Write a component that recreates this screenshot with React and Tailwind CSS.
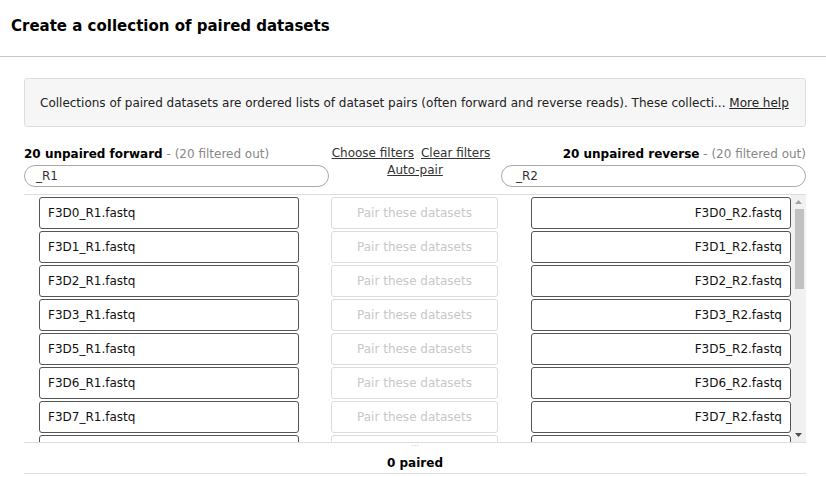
import React from "react";

const nums = ["0","1","2","3","5","6","7","8","9","141","142","143","144","145","146","147","148","149","150","10"];

export default function App() {
  return (
    <div className="w-[826px] h-[477px] bg-white text-[#222] overflow-hidden" style={{ fontFamily: '"DejaVu Sans", Verdana, sans-serif' }}>
      <div className="h-[57px] border-b border-[#c8c8c8] flex items-center pl-[11px] pb-[4px]">
        <h4 className="text-[15px] font-bold text-black">Create a collection of paired datasets</h4>
      </div>
      <div className="px-[24px] pt-[21px] pr-[20px]">
        <div className="h-[49px] bg-[#f6f6f6] border border-[#dedede] rounded-[3px] flex items-center pl-[15px] text-[12px] text-[#222]">
          <span>Collections of paired datasets are ordered lists of dataset pairs (often forward and reverse reads). These collecti... <a className="underline">More help</a></span>
        </div>
        <div className="grid grid-cols-[305px_1fr_305px] mt-[18px] h-[50px]">
          <div className="flex flex-col">
            <div className="text-[12px] leading-[16px] mt-[1px]"><b className="text-black">20 unpaired forward</b><span className="text-[#888]"> - (20 filtered out)</span></div>
            <div className="mt-[3px] h-[22px] border border-[#aaa] rounded-full flex items-center pl-[11px] text-[12px] text-[#333]">_R1</div>
          </div>
          <div className="flex flex-col items-center text-[12px] leading-[17px] text-[#333]">
            <div className="flex gap-[7px] mr-[8px]"><a className="underline">Choose filters</a><a className="underline">Clear filters</a></div>
            <a className="underline">Auto-pair</a>
          </div>
          <div className="flex flex-col">
            <div className="text-[12px] leading-[16px] mt-[1px] text-right"><b className="text-black">20 unpaired reverse</b><span className="text-[#888]"> - (20 filtered out)</span></div>
            <div className="mt-[3px] h-[22px] border border-[#aaa] rounded-full flex items-center pl-[14px] text-[12px] text-[#333]">_R2</div>
          </div>
        </div>
        <div className="border-t border-[#ddd] mt-[-1px] flex h-[248px]">
          <div className="w-[767px] h-[247px] overflow-hidden">
            <div className="flex flex-col gap-[2px] pt-[2px] pl-[15px] pb-[2px]">
              {nums.map((n) => (
                <div key={n} className="flex">
                  <div className="w-[260px] h-[32px] border border-[#555] rounded-[3px] flex items-center pl-[8px] text-[12px] text-[#111]">F3D{n}_R1.fastq</div>
                  <div className="w-[167px] ml-[32px] h-[32px] border border-[#ddd] rounded-[3px] flex items-center justify-center text-[12px] text-[#c8c8c8]">Pair these datasets</div>
                  <div className="w-[260px] ml-[33px] h-[32px] border border-[#555] rounded-[3px] flex items-center justify-end pr-[8px] text-[12px] text-[#111]">F3D{n}_R2.fastq</div>
                </div>
              ))}
            </div>
          </div>
          <div className="w-[15px] h-[247px] bg-[#f1f1f1] flex flex-col items-center">
            <div className="h-[14px] flex items-center justify-center">
              <svg width="7" height="4" viewBox="0 0 7 4"><path d="M0 4 L3.5 0 L7 4 Z" fill="#a3a3a3" /></svg>
            </div>
            <div className="w-[9px] h-[80px] bg-[#c1c1c1] ml-[1px]" />
            <div className="flex-1" />
            <div className="h-[14px] flex items-center justify-center">
              <svg width="7" height="4" viewBox="0 0 7 4"><path d="M0 0 L7 0 L3.5 4 Z" fill="#505050" /></svg>
            </div>
          </div>
        </div>
        <div className="border-t border-[#ddd] border-b h-[32px] relative flex items-center justify-center text-[12px] font-bold text-black pt-[10px]">
          <span className="absolute top-[0px] left-1/2 -translate-x-1/2 text-[8px] text-[#c8c8c8] font-normal leading-none">···</span>
          0 paired
        </div>
      </div>
    </div>
  );
}
